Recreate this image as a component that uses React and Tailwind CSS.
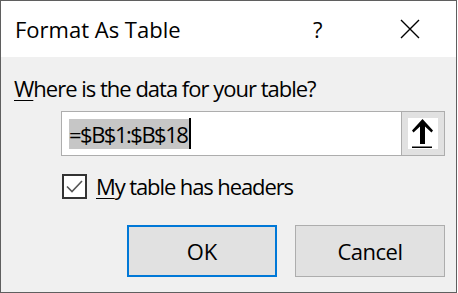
export default function App() {
  return (
    <div className="w-[458px] h-[293px] bg-white" style={{ fontFamily: '"Open Sans", "Noto Sans", sans-serif' }}>
      <div className="w-[457px] h-[293px] border border-[#5f5f5f] flex flex-col">
        {/* title bar */}
        <div className="h-[56px] bg-white flex items-center pl-[14px] text-black">
          <span className="flex-1 text-[22px] leading-[30px]">Format As Table</span>
          <span className="w-[12px] text-[22px] leading-[30px]">?</span>
          <svg className="ml-[75px] mr-[36px]" width="20" height="20" viewBox="0 0 20 20">
            <path d="M1 1 L19 19 M19 1 L1 19" stroke="#000" strokeWidth="1.4" fill="none" />
          </svg>
        </div>

        {/* body */}
        <div className="flex-1 bg-[#f0f0f0] flex flex-col text-black">
          <div className="mt-[16px] ml-[13px] text-[22px] leading-[30px] tracking-[-1px]">
            <span className="underline underline-offset-[3px] decoration-1">W</span>here is the data for your table?
          </div>

          <div className="mt-[8px] ml-[60px] w-[384px] h-[45px] border border-[#adadad] bg-white flex">
            <div className="flex-1 flex items-center pl-[7px]">
              <span className="bg-[#c6c6c6] text-[22px] leading-[30px] tracking-[-1.5px] pr-[2px]">=$B$1:$B$18</span>
              <span className="w-[2px] h-[31px] bg-black"></span>
            </div>
            <div className="w-[44px] border border-[#adadad] -my-[1px] -mr-[1px] bg-[#e1e1e1] flex items-center justify-center">
              <svg width="30" height="31" viewBox="0 0 30 31" className="bg-white">
                <path d="M14.5 1 L25 12.5 L23.5 14.5 L17 8.5 L17 26 L12 26 L12 8.5 L5.5 14.5 L4 12.5 Z" fill="#000" />
                <rect x="4" y="28.5" width="20" height="1.5" fill="#000" />
              </svg>
            </div>
          </div>

          <div className="mt-[15px] ml-[61px] flex items-center">
            <div className="w-[25px] h-[25px] border-2 border-[#333333] bg-white flex items-center justify-center">
              <svg width="21" height="21" viewBox="0 0 21 21">
                <path d="M3 10.5 L8 15.5 L18 5" stroke="#555" strokeWidth="1.6" fill="none" />
              </svg>
            </div>
            <span className="ml-[9px] text-[22px] leading-[30px] tracking-[-1.1px]">
              <span className="underline underline-offset-[3px] decoration-1">M</span>y table has headers
            </span>
          </div>

          <div className="mt-[24px] ml-[126px] flex gap-[18px]">
            <div className="w-[150px] h-[52px] border-2 border-[#0078d7] bg-[#e1e1e1] flex items-center justify-center text-[22px] leading-[30px]">
              OK
            </div>
            <div className="w-[150px] h-[52px] border border-[#adadad] bg-[#e1e1e1] flex items-center justify-center text-[22px] leading-[30px] tracking-[-0.5px]">
              Cancel
            </div>
          </div>
        </div>
      </div>
    </div>
  );
}
